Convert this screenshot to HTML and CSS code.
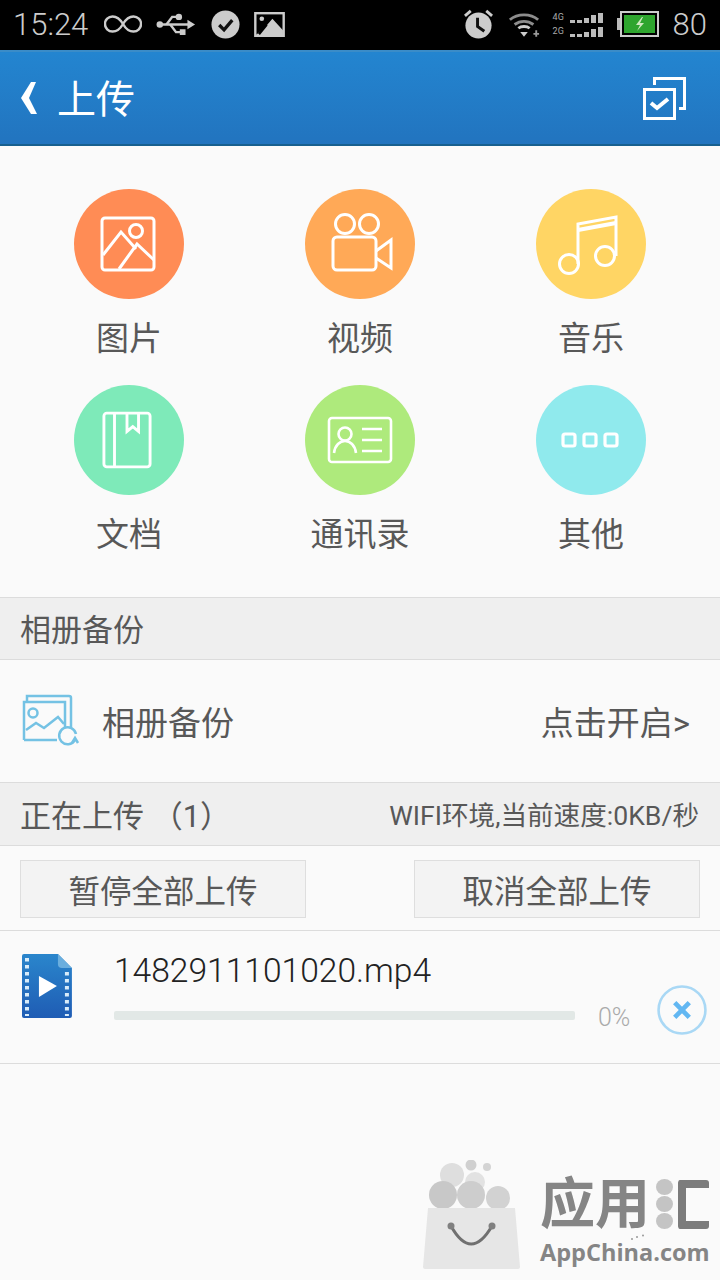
FILE: index.html
```html
<!DOCTYPE html>
<html lang="zh-CN">
<head>
    <meta charset="UTF-8">
    <meta name="viewport" content="width=device-width, initial-scale=1.0">
    <title>上传</title>
    <link rel="stylesheet" href="styles.css">
</head>
<body>
    <!-- Status bar -->
    <div class="status-bar">
        <div class="status-left">
            <span class="status-time">15:24</span>
            <svg class="st-loop" viewBox="0 0 40 20"><path d="M20 10C16 3 12 2 9 2a8 8 0 0 0 0 16c3 0 7-1 11-8s8-8 11-8a8 8 0 0 1 0 16c-3 0-7-1-11-8z" fill="none" stroke="#ccc" stroke-width="2.6"/></svg>
            <svg class="st-usb" viewBox="0 0 42 26"><g fill="none" stroke="#ccc" stroke-width="2.6"><path d="M4 13h32"/><path d="M11 13l6-8h6"/><path d="M15 13l6 8h6"/></g><circle cx="4" cy="13" r="3.4" fill="#ccc"/><circle cx="24" cy="5" r="3.4" fill="#ccc"/><rect x="25" y="18" width="6" height="6" fill="#ccc"/><path d="M33 8l8 5-8 5z" fill="#ccc"/></svg>
            <svg class="st-check" viewBox="0 0 30 30"><circle cx="15" cy="15" r="14.5" fill="#ccc"/><path d="M8.5 15.5l5 5 8.5-10" fill="none" stroke="#111" stroke-width="3.4"/></svg>
            <svg class="st-pic" viewBox="0 0 32 26"><rect width="32" height="26" fill="#ccc"/><rect x="2.5" y="2.5" width="27" height="21" fill="#000"/><path d="M2 24l11-10 6-7 11 12v5z" fill="#ccc"/><circle cx="8" cy="7" r="2.4" fill="#ccc"/><path d="M4 22l8-10 2 2-8 10z" fill="#000"/></svg>
        </div>
        <div class="status-right">
            <svg class="st-alarm" viewBox="0 0 32 32"><circle cx="16" cy="17" r="13.5" fill="#ccc"/><path d="M2 7l6-5M30 7l-6-5" stroke="#ccc" stroke-width="3"/><path d="M15 9v9l7 5" fill="none" stroke="#111" stroke-width="3"/></svg>
            <svg class="st-wifi" viewBox="0 0 34 28"><g fill="none" stroke="#8c8c8c" stroke-width="3"><path d="M2 9c8-7 22-7 30 0"/><path d="M7 14c6-4.500 14-4.500 20 0"/></g><path d="M11 18c3-2.500 9-2.500 12 0" fill="none" stroke="#ccc" stroke-width="3"/><path d="M13 22h8l-4 5z" fill="#ccc"/><path d="M30 20v7M27 24h6" stroke="#999" stroke-width="2"/></svg>
            <div class="st-signal">
                <div class="sig-row"><span class="sig-label">4G</span><i class="b1"></i><i class="b1"></i><i class="b2"></i><i class="b3"></i><i class="b4"></i></div>
                <div class="sig-row"><span class="sig-label">2G</span><i class="b1"></i><i class="b1"></i><i class="b2"></i><i class="b3"></i><i class="b4"></i></div>
            </div>
            <svg class="st-battery" viewBox="0 0 42 26"><rect x="0" y="7" width="3" height="12" fill="#bbb"/><rect x="4" y="1" width="37" height="24" fill="none" stroke="#ccc" stroke-width="2"/><rect x="7" y="4" width="31" height="18" fill="#2ea52e"/><path d="M25 6l-6 8h4l-3 6 7-8h-4l3-6z" fill="#cfe8c0"/></svg>
            <span class="status-level">80</span>
        </div>
    </div>

    <!-- Title bar -->
    <header class="title-bar">
        <div class="title-left">
            <svg class="back-icon" viewBox="0 0 16 32"><path d="M10 0h5L8 16l8 16h-6L0 16z" fill="#fff"/></svg>
            <h1>上传</h1>
        </div>
        <svg class="multi-icon" viewBox="0 0 43 43"><g fill="none" stroke="#fff" stroke-width="3"><path d="M11.500 8V1.500h30v30H36"/><rect x="1.500" y="12.500" width="30" height="29"/><path d="M8 26l6 5 11-9" stroke-width="4"/></g></svg>
    </header>

    <!-- Categories -->
    <section class="cat-grid">
        <div class="cat-item">
            <div class="cat-circle c-image">
                <svg viewBox="0 0 56 56"><g fill="none" stroke="#fff" stroke-width="3"><rect x="2" y="2" width="52" height="52" rx="3"/><circle cx="36" cy="15" r="6.500"/><path d="M3 39l18-23 15 17"/><path d="M19 53l18-25 17 16"/></g></svg>
            </div>
            <span class="cat-label">图片</span>
        </div>
        <div class="cat-item">
            <div class="cat-circle c-video">
                <svg viewBox="0 0 62 60"><g fill="none" stroke="#fff" stroke-width="3"><circle cx="14" cy="11" r="9.500"/><circle cx="38" cy="11" r="9.500"/><rect x="2" y="24" width="43" height="33" rx="4"/><path d="M45 38l15-11v28L45 45"/></g></svg>
            </div>
            <span class="cat-label">视频</span>
        </div>
        <div class="cat-item">
            <div class="cat-circle c-music">
                <svg viewBox="0 0 62 62"><g fill="none" stroke="#fff" stroke-width="3"><circle cx="11" cy="49" r="9.500"/><circle cx="47" cy="41" r="9.500"/><path d="M20 49V9L58 2v39"/><path d="M20 15l38-7" stroke-width="4"/></g></svg>
            </div>
            <span class="cat-label">音乐</span>
        </div>
        <div class="cat-item">
            <div class="cat-circle c-doc">
                <svg viewBox="0 0 52 60"><g fill="none" stroke="#fff" stroke-width="3"><rect x="2" y="2" width="48" height="56" rx="3"/><path d="M13 2v56"/><path d="M26 2v19l6-5 6 5V2"/></g></svg>
            </div>
            <span class="cat-label">文档</span>
        </div>
        <div class="cat-item">
            <div class="cat-circle c-contact">
                <svg viewBox="0 0 66 48"><g fill="none" stroke="#fff" stroke-width="2.600"><rect x="2" y="2" width="62" height="44" rx="3"/><circle cx="18" cy="18" r="6.500"/><path d="M7 37c1-8 6-12 11-12s10 4 11 12"/><path d="M35 13h20M35 24h20M35 35h20"/></g></svg>
            </div>
            <span class="cat-label">通讯录</span>
        </div>
        <div class="cat-item">
            <div class="cat-circle c-other">
                <svg viewBox="0 0 58 16"><g fill="none" stroke="#fff" stroke-width="3.200"><rect x="2" y="2" width="12" height="12" rx="2"/><rect x="23" y="2" width="12" height="12" rx="2"/><rect x="44" y="2" width="12" height="12" rx="2"/></g></svg>
            </div>
            <span class="cat-label">其他</span>
        </div>
    </section>

    <!-- Album backup -->
    <div class="section-head">相册备份</div>
    <div class="backup-row">
        <div class="backup-left">
            <svg class="backup-icon" viewBox="0 0 58 54"><g fill="none" stroke="#74c2e4" stroke-width="2.500"><path d="M5 7V2h42a2 2 0 0 1 2 2v31"/><path d="M2 46V8h41v25"/><path d="M2 46h33"/><circle cx="11" cy="19" r="4.500"/><path d="M4 36l10-7 8 5 14-11 6 7"/><path d="M54 40a8.500 8.500 0 1 0-1 6"/><path d="M56 49l-3-5-3 5"/></g></svg>
            <span class="backup-label">相册备份</span>
        </div>
        <span class="backup-action">点击开启&gt;</span>
    </div>

    <!-- Upload list -->
    <div class="section-head upload-head">
        <span>正在上传 （1）</span>
        <span class="speed">WIFI环境,当前速度:0KB/秒</span>
    </div>
    <div class="btn-row">
        <button class="all-btn">暂停全部上传</button>
        <button class="all-btn">取消全部上传</button>
    </div>
    <div class="upload-item">
        <svg class="file-icon" viewBox="0 0 50 64">
            <defs>
                <linearGradient id="fileGrad" x1="0" y1="0" x2="0" y2="1"><stop offset="0" stop-color="#2a86cc"/><stop offset="1" stop-color="#1f5cb4"/></linearGradient>
            </defs>
            <path d="M2 0h34l14 14v48a2 2 0 0 1-2 2H2a2 2 0 0 1-2-2V2a2 2 0 0 1 2-2z" fill="url(#fileGrad)"/>
            <path d="M36 0l14 14H40a4 4 0 0 1-4-4z" fill="#6aaede"/>
            <path d="M5 4v58M45 18v44" fill="none" stroke="#d8ecfa" stroke-width="4" stroke-dasharray="3.500 3.500"/>
            <path d="M17 22l18 10-18 11z" fill="#fff"/>
        </svg>
        <div class="file-body">
            <div class="file-name">1482911101020.mp4</div>
            <div class="progress-row">
                <div class="progress-track"><div class="progress-fill"></div></div>
                <span class="progress-text">0%</span>
            </div>
        </div>
        <svg class="cancel-icon" viewBox="0 0 48 48"><circle cx="24" cy="24" r="22.500" fill="none" stroke="#a9d8f5" stroke-width="2.500"/><path d="M17 17l14 14M31 17L17 31" stroke="#62b7f2" stroke-width="4.500"/></svg>
    </div>

    <!-- Watermark -->
    <div class="watermark">
        <svg class="wm-bag" viewBox="0 0 100 110">
            <circle cx="49" cy="5" r="5.500" fill="#d0d0d0"/>
            <circle cx="65" cy="7" r="4" fill="#d4d4d4"/>
            <circle cx="30" cy="15" r="12" fill="#dedede"/>
            <circle cx="53" cy="22" r="10" fill="#e2e2e2"/>
            <circle cx="21" cy="35" r="14" fill="#c8c8c8"/>
            <circle cx="49" cy="35" r="14" fill="#cdcdcd"/>
            <circle cx="76" cy="38" r="12" fill="#d2d2d2"/>
            <path d="M6 48h87l5 59a2 2 0 0 1-2 2H3a2 2 0 0 1-2-2z" fill="#e6e6e6"/>
            <path d="M29 66Q49 102 70 66" fill="none" stroke="#707070" stroke-width="3"/>
            <circle cx="29" cy="66" r="3.500" fill="#808080"/><circle cx="70" cy="66" r="3.500" fill="#808080"/>
        </svg>
        <div class="wm-text">
            <div class="wm-title">
                <span>应用</span>
                <div class="wm-dots"><i></i><i></i><i></i></div>
                <div class="wm-bracket"></div>
            </div>
            <div class="wm-site">AppChina.com</div>
            <svg class="wm-spark" viewBox="0 0 16 6"><circle cx="2" cy="5" r="1" fill="#999"/><circle cx="7" cy="3" r="1" fill="#999"/><circle cx="13" cy="1.500" r="1" fill="#999"/></svg>
        </div>
    </div>
</body>
</html>
```

FILE: styles.css
```css
:root {
    --text: #585858;
    --head-bg: #efefef;
    --line: #dcdcdc;
    --page: #fafafa;
}

* {
    margin: 0;
    padding: 0;
    box-sizing: border-box;
}

body {
    position: relative;
    width: 720px;
    height: 1280px;
    overflow: hidden;
    background-color: var(--page);
    color: var(--text);
    font-family: Roboto, "Noto Sans CJK SC", sans-serif;
}

svg {
    display: block;
}

/* status bar */
.status-bar {
    height: 50px;
    background-color: #000;
    color: #ccc;
    display: flex;
    justify-content: space-between;
    align-items: center;
    padding: 0 13px 2px 13px;
}

.status-left,
.status-right {
    display: flex;
    align-items: center;
}

.status-time,
.status-level {
    font-size: 31px;
    font-weight: 300;
}

.st-loop { width: 38px; height: 20px; margin-left: 16px; }
.st-usb { width: 40px; height: 25px; margin-left: 14px; }
.st-check { width: 29px; height: 29px; margin-left: 15px; }
.st-pic { width: 31px; height: 25px; margin-left: 14px; }
.st-alarm { width: 31px; height: 31px; }
.st-wifi { width: 32px; height: 27px; margin-left: 14px; }
.st-battery { width: 42px; height: 26px; margin-left: 14px; }
.status-level { margin-left: 14px; }

.st-signal {
    margin-left: 13px;
    display: flex;
    flex-direction: column;
    gap: 2px;
}

.sig-row {
    display: flex;
    align-items: flex-end;
    gap: 2px;
    height: 12px;
}

.sig-label {
    font-size: 9px;
    line-height: 12px;
    width: 15px;
    color: #aaa;
}

.sig-row i { width: 5px; background-color: #bbb; }
.sig-row .b1 { height: 3px; }
.sig-row .b2 { height: 5px; }
.sig-row .b3 { height: 8px; }
.sig-row .b4 { height: 10px; }

/* title bar */
.title-bar {
    height: 96px;
    background: linear-gradient(#2385d0, #2274bf);
    border-top: 2px solid #3a8cc8;
    border-bottom: 2px solid #17608f;
    display: flex;
    justify-content: space-between;
    align-items: center;
    padding: 0 34px 0 21px;
    color: #fff;
}

.title-left {
    display: flex;
    align-items: center;
}

.back-icon {
    width: 16px;
    height: 32px;
}

.title-left h1 {
    font-size: 39px;
    font-weight: 400;
    margin-left: 20px;
    padding-bottom: 5px;
}

.multi-icon {
    width: 43px;
    height: 43px;
}

/* category grid */
.cat-grid {
    display: grid;
    grid-template-columns: repeat(3, 231px);
    grid-auto-rows: 196px;
    padding: 43px 0 0 13.5px;
    height: 451px;
}

.cat-item {
    display: flex;
    flex-direction: column;
    align-items: center;
}

.cat-circle {
    width: 110px;
    height: 110px;
    border-radius: 50%;
    display: flex;
    align-items: center;
    justify-content: center;
}

.c-image { background-color: #ff8c55; }
.c-image svg { width: 56px; height: 56px; margin-right: 3px; }
.c-video { background-color: #ffa957; }
.c-video svg { width: 62px; height: 60px; margin: 0 0 3px 4px; }
.c-music { background-color: #ffd564; }
.c-music svg { width: 62px; height: 62px; margin: 4px 5px 0 0; }
.c-doc { background-color: #7eeab9; }
.c-doc svg { width: 50px; height: 58px; margin-right: 4px; }
.c-contact { background-color: #aeea7c; }
.c-contact svg { width: 66px; height: 48px; }
.c-other { background-color: #90eaed; }
.c-other svg { width: 58px; height: 16px; margin-right: 2px; }

.cat-label {
    font-size: 33px;
    line-height: 46px;
    margin-top: 17px;
}

/* section heads */
.section-head {
    height: 63px;
    background-color: var(--head-bg);
    border-top: 1px solid var(--line);
    border-bottom: 1px solid var(--line);
    display: flex;
    align-items: center;
    padding: 0 20px 2px;
    font-size: 31px;
}

.upload-head {
    height: 64px;
    justify-content: space-between;
    padding-right: 21px;
    white-space: pre;
}

.speed {
    font-size: 26.6px;
}

/* backup row */
.backup-row {
    height: 122px;
    display: flex;
    justify-content: space-between;
    align-items: center;
    padding: 0 30px 0 22px;
    font-size: 33px;
}

.backup-left {
    display: flex;
    align-items: center;
}

.backup-icon {
    width: 58px;
    height: 54px;
}

.backup-label {
    margin-left: 22px;
}

/* all buttons */
.btn-row {
    height: 85px;
    display: flex;
    justify-content: space-between;
    align-items: center;
    padding: 2px 20px 0;
    border-bottom: 1px solid var(--line);
}

.all-btn {
    width: 286px;
    height: 58px;
    background-color: #f3f3f3;
    border: 1px solid #dedede;
    color: var(--text);
    font-family: inherit;
    font-size: 31.5px;
}

/* upload item */
.upload-item {
    height: 133px;
    border-bottom: 1px solid var(--line);
    display: flex;
    align-items: flex-start;
    padding: 23px 13px 0 22px;
}

.file-icon {
    width: 50px;
    height: 64px;
}

.file-body {
    width: 518px;
    margin-left: 42px;
}

.file-name {
    font-size: 33.6px;
    line-height: 34px;
    color: #222;
    font-weight: 300;
}

.progress-row {
    display: flex;
    align-items: center;
    margin-top: 11px;
}

.progress-track {
    width: 461px;
    height: 9px;
    background-color: #e2e8e6;
    border-radius: 2px;
}

.progress-fill {
    width: 0;
    height: 100%;
}

.progress-text {
    margin: 4px 0 0 23px;
    font-size: 25px;
    font-weight: 300;
    color: #aaa;
}

.cancel-icon {
    width: 50px;
    height: 50px;
    margin: 31px 0 0 26px;
    flex-shrink: 0;
}

/* watermark sits over the page corner */
.watermark {
    position: absolute;
    left: 422px;
    top: 1160px;
    display: flex;
    align-items: flex-start;
}

.wm-bag {
    width: 100px;
    height: 110px;
}

.wm-text {
    position: relative;
    margin: 16px 0 0 18px;
    color: #858585;
}

.wm-title {
    display: flex;
    align-items: center;
    height: 56px;
    font-size: 55px;
    line-height: 56px;
    font-weight: 700;
}

.wm-dots {
    display: flex;
    flex-direction: column;
    gap: 1px;
    margin-left: 6px;
}

.wm-dots i {
    width: 17px;
    height: 16px;
    border-radius: 50%;
    background-color: #c4c4c4;
}

.wm-bracket {
    width: 31px;
    height: 49px;
    margin-left: 5px;
    border: 8px solid #7c7c7c;
    border-right: none;
    border-radius: 3px;
}

.wm-site {
    font-family: "Open Sans", sans-serif;
    font-size: 23.5px;
    font-weight: 700;
    line-height: 30px;
    margin-top: 5px;
    white-space: nowrap;
}

.wm-spark {
    position: absolute;
    left: 90px;
    top: 58px;
    width: 16px;
    height: 6px;
}
```
